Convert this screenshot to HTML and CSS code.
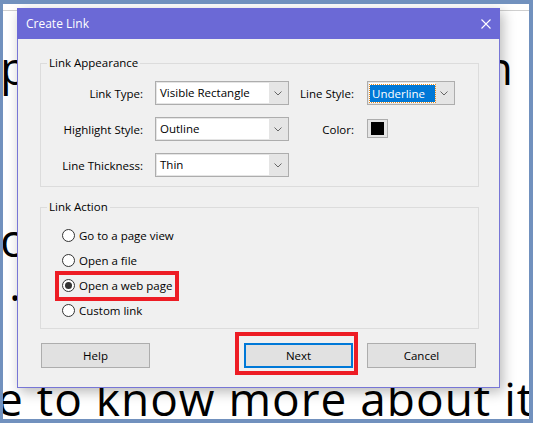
FILE: index.html
```html
<!DOCTYPE html>
<html>
<head>
<meta charset="utf-8">
<link rel="stylesheet" href="styles.css">
</head>
<body>
<div class="page">
  <div class="doc">
    <div class="ln ln1"><span class="frag-l">pa</span><span class="frag-r">n</span></div>
    <div class="ln ln2"><span>o</span></div>
    <div class="ln ln3"><span>.</span></div>
    <div class="ln ln4"><span>e to know more about it</span></div>
  </div>

  <div class="dialog">
    <div class="titlebar">
      <span class="title">Create Link</span>
      <svg class="close" width="10" height="10" viewBox="0 0 10 10"><path d="M0.5 0.5L9.5 9.5M9.5 0.5L0.5 9.5" stroke="#fff" stroke-width="1.1" fill="none"/></svg>
    </div>
    <div class="body">
      <fieldset class="group">
        <legend>Link Appearance</legend>
        <div class="props">
          <label class="lbl">Link Type:</label>
          <div class="select"><span class="val">Visible Rectangle</span><span class="arrow"><svg width="8" height="5" viewBox="0 0 8 5"><path d="M0.5 0.5L4 4L7.5 0.5" stroke="#666" fill="none"/></svg></span></div>
          <label class="lbl lbl2">Line Style:</label>
          <div class="select"><span class="val"><span class="hl">Underline</span></span><span class="arrow"><svg width="8" height="5" viewBox="0 0 8 5"><path d="M0.5 0.5L4 4L7.5 0.5" stroke="#666" fill="none"/></svg></span></div>

          <label class="lbl">Highlight Style:</label>
          <div class="select"><span class="val">Outline</span><span class="arrow"><svg width="8" height="5" viewBox="0 0 8 5"><path d="M0.5 0.5L4 4L7.5 0.5" stroke="#666" fill="none"/></svg></span></div>
          <label class="lbl lbl2">Color:</label>
          <div class="swatch"><span class="chip"></span></div>

          <label class="lbl">Line Thickness:</label>
          <div class="select"><span class="val">Thin</span><span class="arrow"><svg width="8" height="5" viewBox="0 0 8 5"><path d="M0.5 0.5L4 4L7.5 0.5" stroke="#666" fill="none"/></svg></span></div>
        </div>
      </fieldset>

      <fieldset class="group group2">
        <legend>Link Action</legend>
        <div class="radios">
          <div class="rrow"><label class="radio"><span class="dot"></span>Go to a page view</label></div>
          <div class="rrow"><label class="radio"><span class="dot"></span>Open a file</label></div>
          <div class="rrow"><label class="radio marked"><span class="dot on"></span>Open a web page</label></div>
          <div class="rrow"><label class="radio"><span class="dot"></span>Custom link</label></div>
        </div>
      </fieldset>

      <div class="buttons">
        <button class="btn">Help</button>
        <span class="btn-wrap"><button class="btn primary">Next</button><span class="callout"></span></span>
        <button class="btn">Cancel</button>
      </div>
    </div>
  </div>
</div>
</body>
</html>
```

FILE: styles.css
```css
html, body {
  margin: 0;
  padding: 0;
}
body {
  background: #7191be;
  width: 533px;
  height: 423px;
  overflow: hidden;
  font-family: "Open Sans", "Noto Sans", sans-serif;
}
.page {
  position: relative;
  margin: 4px 4px 0 3px;
  height: 415px;
  background: #fff;
  overflow: hidden;
}
.doc {
  margin-top: 6px;
  border-top: 1px solid #cfcfcf;
  font-family: "Open Sans", sans-serif;
  font-size: 46px;
  color: #000;
  white-space: nowrap;
}
.ln {
  height: 50px;
  line-height: 50px;
}
.ln1 {
  margin-top: 31px;
  display: flex;
  justify-content: space-between;
}
.ln1 .frag-l { margin-left: -3px; }
.ln1 .frag-r { margin-right: 16px; }
.ln2 { margin-top: 122px; margin-left: -3px; }
.ln3 { margin-top: -6px; margin-left: 6px; }
.ln4 { margin-top: 65px; margin-left: -6px; letter-spacing: 1px; }

.dialog {
  position: absolute;
  left: 14px;
  top: 4px;
  width: 483px;
  height: 380px;
  box-sizing: border-box;
  border: 1px solid #7776d6;
  background: #f0f0f0;
  box-shadow: 3px 4px 12px rgba(0, 0, 0, 0.28);
  font-size: 11.5px;
  color: #000;
}
.titlebar {
  height: 31px;
  margin: -1px -1px 0 -1px;
  background: #6b69d6;
  display: flex;
  align-items: center;
  justify-content: space-between;
  padding: 0 9px 0 9px;
}
.title {
  color: #fff;
  font-size: 12px;
}
.close { display: block; }

.body {
  padding: 16px 20px 0 22px;
}
.group {
  margin: 0;
  padding: 0 0 9px 0;
  border: 1px solid #dcdcdc;
  min-width: 0;
}
.group legend {
  margin-left: 6px;
  padding: 0 2px;
  line-height: 16px;
  font-size: 11.5px;
}
.props {
  margin-top: 10px;
  display: grid;
  grid-template-columns: 114px 134px 78px 88px;
  grid-auto-rows: 24px;
  row-gap: 12px;
  align-items: center;
}
.lbl {
  text-align: right;
  padding-right: 12px;
}
.lbl2 { padding-right: 13px; }
.select {
  height: 24px;
  box-sizing: border-box;
  border: 1px solid #adadad;
  background: #e5e5e5;
  padding: 1px;
  display: flex;
}
.val {
  flex: 1;
  background: #fff;
  padding-left: 3px;
  line-height: 20px;
  display: flex;
  align-items: center;
}
.hl {
  background: #0078d7;
  color: #fff;
  outline: 1px dotted #e88a1a;
  padding: 0 2px;
  margin-left: -2px;
  line-height: 17px;
  width: 61px;
}
.arrow {
  width: 18px;
  display: flex;
  align-items: center;
  justify-content: center;
}
.arrow svg { display: block; }
.swatch {
  width: 21px;
  height: 19px;
  box-sizing: border-box;
  border: 1px solid #adadad;
  background: #e5e5e5;
  padding: 2px 3px 2px 3px;
  margin-top: -2px;
}
.chip {
  display: block;
  width: 13px;
  height: 13px;
  background: #000;
}

.group2 { margin-top: 12px; padding-bottom: 5px; }
.radios { margin-top: 8px; }
.rrow {
  height: 25px;
  display: flex;
  align-items: center;
  padding-left: 18px;
}
.radio {
  display: inline-flex;
  align-items: center;
  height: 22px;
  padding: 0 3px;
  gap: 4px;
}
.radio.marked { outline: 4px solid #ed1c24; }
.dot {
  width: 13px;
  height: 13px;
  box-sizing: border-box;
  border: 1px solid #333;
  border-radius: 50%;
  background: #fff;
  display: flex;
  align-items: center;
  justify-content: center;
}
.dot.on::after {
  content: "";
  width: 7px;
  height: 7px;
  border-radius: 50%;
  background: #333;
}

.buttons {
  margin-top: 14px;
  display: flex;
  align-items: center;
  padding: 0 3px 0 1px;
}
.btn {
  width: 109px;
  height: 25px;
  box-sizing: border-box;
  border: 1px solid #adadad;
  background: #e1e1e1;
  font-family: inherit;
  font-size: 11.5px;
  color: #000;
  padding: 0;
}
.btn.primary { border: 2px solid #0078d7; }
.btn-wrap {
  position: relative;
  display: block;
  margin-left: auto;
  margin-right: 14px;
  height: 25px;
}
.callout {
  position: absolute;
  left: -9px;
  top: -11px;
  right: -5px;
  bottom: -7px;
  border: 4px solid #ed1c24;
}
```
